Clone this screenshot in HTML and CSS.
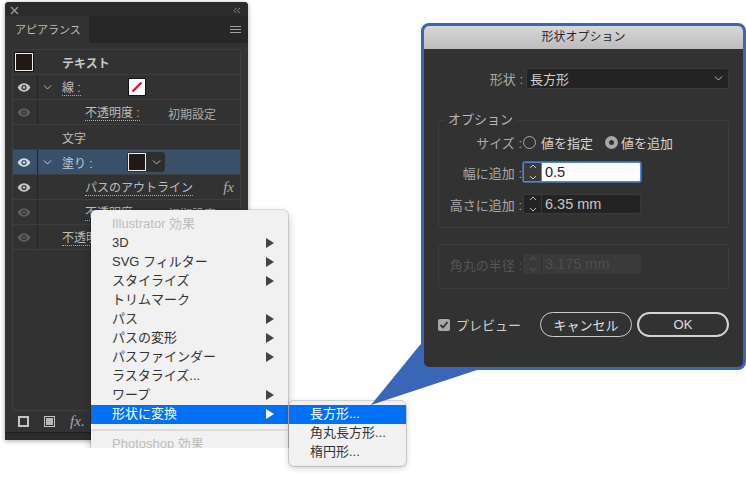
FILE: index.html
```html
<!DOCTYPE html>
<html lang="ja">
<head>
<meta charset="utf-8">
<title>形状オプション</title>
<link rel="stylesheet" href="styles.css">
</head>
<body>
<div class="canvas">
  <section class="panel">
    <div class="panel-top">
      <svg class="ico" width="9" height="9" viewBox="0 0 9 9"><path d="M1 1l7 7M8 1L1 8" stroke="#999" stroke-width="1.4"/></svg>
      <svg class="ico" width="8" height="7" viewBox="0 0 8 7"><path d="M3.5 1L1 3.5 3.5 6M7 1L4.500 3.500 7 6" stroke="#888" fill="none"/></svg>
    </div>
    <div class="tabs">
      <div class="tab">アピアランス</div>
      <svg class="burger" width="11" height="8" viewBox="0 0 11 8"><path d="M0 .5h11M0 3.500h11M0 6.500h11" stroke="#a0a0a0"/></svg>
    </div>
    <div class="list">
      <div class="row">
        <div class="eye"><span class="swatch big"></span></div>
        <div class="cell strong">テキスト</div>
      </div>
      <div class="row">
        <div class="eye"><svg class="eyei" width="14" height="9" viewBox="0 0 14 9"><path d="M.5 4.500C3 1 5 .3 7 .3s4 .7 6.500 4.200C11 8 9 8.700 7 8.700S3 8 .5 4.500z" fill="#c8c8c8"/><circle cx="7" cy="4.500" r="2.600" fill="#333"/><circle cx="7" cy="4.500" r="1.300" fill="#c8c8c8"/></svg></div>
        <div class="cell"><svg class="chev" width="9" height="5" viewBox="0 0 9 5"><path d="M1 .5l3.500 3.500L8 .5" stroke="#bbb" fill="none"/></svg><span class="lab link">線 :</span><span class="stroke-sw"><svg width="12" height="12" viewBox="0 0 12 12"><path d="M1.500 10.500l9-9" stroke="#e0103c" stroke-width="2.400"/></svg></span></div>
      </div>
      <div class="row">
        <div class="eye dim"><svg class="eyei" width="14" height="9" viewBox="0 0 14 9"><path d="M.5 4.500C3 1 5 .3 7 .3s4 .7 6.500 4.200C11 8 9 8.700 7 8.700S3 8 .5 4.500z" fill="#5e5e5e"/><circle cx="7" cy="4.500" r="2.600" fill="#333"/><circle cx="7" cy="4.500" r="1.300" fill="#5e5e5e"/></svg></div>
        <div class="cell indent"><span class="link">不透明度 :</span><span class="val">初期設定</span></div>
      </div>
      <div class="row">
        <div class="eye blank"></div>
        <div class="cell plain">文字</div>
      </div>
      <div class="row sel">
        <div class="eye"><svg class="eyei" width="14" height="9" viewBox="0 0 14 9"><path d="M.5 4.500C3 1 5 .3 7 .3s4 .7 6.500 4.200C11 8 9 8.700 7 8.700S3 8 .5 4.500z" fill="#d0d8e0"/><circle cx="7" cy="4.500" r="2.600" fill="#39506a"/><circle cx="7" cy="4.500" r="1.300" fill="#d0d8e0"/></svg></div>
        <div class="cell"><svg class="chev" width="9" height="5" viewBox="0 0 9 5"><path d="M1 .5l3.500 3.500L8 .5" stroke="#ccd" fill="none"/></svg><span class="lab fillname">塗り :</span><span class="fill-sw"><span class="swatch"></span><svg width="9" height="5" viewBox="0 0 9 5"><path d="M1 .5l3.500 3.500L8 .5" stroke="#bbb" fill="none"/></svg></span></div>
      </div>
      <div class="row">
        <div class="eye"><svg class="eyei" width="14" height="9" viewBox="0 0 14 9"><path d="M.5 4.500C3 1 5 .3 7 .3s4 .7 6.500 4.200C11 8 9 8.700 7 8.700S3 8 .5 4.500z" fill="#c8c8c8"/><circle cx="7" cy="4.500" r="2.600" fill="#333"/><circle cx="7" cy="4.500" r="1.300" fill="#c8c8c8"/></svg></div>
        <div class="cell indent"><span class="link">パスのアウトライン</span><i class="fx">fx</i></div>
      </div>
      <div class="row">
        <div class="eye dim"><svg class="eyei" width="14" height="9" viewBox="0 0 14 9"><path d="M.5 4.500C3 1 5 .3 7 .3s4 .7 6.500 4.200C11 8 9 8.700 7 8.700S3 8 .5 4.500z" fill="#5e5e5e"/><circle cx="7" cy="4.500" r="2.600" fill="#333"/><circle cx="7" cy="4.500" r="1.300" fill="#5e5e5e"/></svg></div>
        <div class="cell indent"><span class="link">不透明度 :</span><span class="val">初期設定</span></div>
      </div>
      <div class="row">
        <div class="eye dim"><svg class="eyei" width="14" height="9" viewBox="0 0 14 9"><path d="M.5 4.500C3 1 5 .3 7 .3s4 .7 6.500 4.200C11 8 9 8.700 7 8.700S3 8 .5 4.500z" fill="#5e5e5e"/><circle cx="7" cy="4.500" r="2.600" fill="#333"/><circle cx="7" cy="4.500" r="1.300" fill="#5e5e5e"/></svg></div>
        <div class="cell plain"><span class="link">不透明度</span></div>
      </div>
    </div>
    <div class="tools">
      <svg width="11" height="11" viewBox="0 0 11 11"><rect x="1" y="1" width="9" height="9" fill="none" stroke="#c4c4c4" stroke-width="2"/></svg>
      <svg width="11" height="11" viewBox="0 0 11 11"><rect x=".5" y=".5" width="10" height="10" fill="none" stroke="#c4c4c4"/><rect x="2" y="2" width="7" height="7" fill="#b8b8b8"/></svg>
      <span class="tool-fx"><i>fx</i>.</span>
    </div>
    <div class="panel-foot"></div>
  </section>

  <nav class="menu">
    <div class="mi dis">Illustrator 効果</div>
    <div class="mi arrow">3D</div>
    <div class="mi arrow">SVG フィルター</div>
    <div class="mi arrow">スタイライズ</div>
    <div class="mi">トリムマーク</div>
    <div class="mi arrow">パス</div>
    <div class="mi arrow">パスの変形</div>
    <div class="mi arrow">パスファインダー</div>
    <div class="mi">ラスタライズ...</div>
    <div class="mi arrow">ワープ</div>
    <div class="mi arrow on">形状に変換</div>
    <div class="sep"></div>
    <div class="mi dis">Photoshop 効果</div>
  </nav>

  <nav class="submenu">
    <div class="si on">長方形...</div>
    <div class="si">角丸長方形...</div>
    <div class="si">楕円形...</div>
  </nav>

  <svg class="callout" width="130" height="80" viewBox="0 0 130 80"><polygon points="2,69 55,4 111,33" fill="#3a66b8"/></svg>

  <section class="dialog">
    <header class="title">形状オプション</header>
    <div class="body">
      <div class="shape-row">
        <span class="flab">形状 :</span>
        <div class="select"><span>長方形</span><svg width="9" height="5" viewBox="0 0 9 5"><path d="M1 .5l3.500 3.500L8 .5" stroke="#bbb" fill="none"/></svg></div>
      </div>
      <fieldset class="group">
        <legend>オプション</legend>
        <div class="frow radios">
          <span class="l1">サイズ :</span>
          <span class="radio"></span><span class="rt">値を指定</span>
          <span class="radio chk"></span><span class="rt">値を追加</span>
        </div>
        <div class="frow">
          <span class="l1">幅に追加 :</span>
          <div class="spin focus"><span class="st"><svg width="8" height="18" viewBox="0 0 8 18"><path d="M1 5l3-3 3 3M1 13l3 3 3-3" stroke="#555" fill="none"/></svg></span><span class="sv">0.5</span></div>
        </div>
        <div class="frow">
          <span class="l1">高さに追加 :</span>
          <div class="spin"><span class="st"><svg width="8" height="18" viewBox="0 0 8 18"><path d="M1 5l3-3 3 3M1 13l3 3 3-3" stroke="#bbb" fill="none"/></svg></span><span class="sv">6.35 mm</span></div>
        </div>
      </fieldset>
      <div class="group off">
        <div class="frow">
          <span class="l1 offl">角丸の半径 :</span>
          <div class="spin dim"><span class="st"><svg width="8" height="18" viewBox="0 0 8 18"><path d="M1 5l3-3 3 3M1 13l3 3 3-3" stroke="#555" fill="none"/></svg></span><span class="sv">3.175 mm</span></div>
        </div>
      </div>
      <div class="actions">
        <span class="check"><svg width="10" height="10" viewBox="0 0 10 10"><path d="M1.500 5l2.500 2.500L8.500 2" stroke="#333" stroke-width="1.800" fill="none"/></svg></span>
        <span class="pv">プレビュー</span>
        <button class="btn cancel">キャンセル</button>
        <button class="btn ok">OK</button>
      </div>
    </div>
  </section>
</div>
</body>
</html>
```
FILE: styles.css
```css
* { box-sizing: border-box; }
html, body { margin: 0; padding: 0; background: #fff; }
body { font-family: "Liberation Sans", "Noto Sans CJK JP", sans-serif; font-size: 12px; }
.canvas { position: relative; width: 746px; height: 493px; overflow: hidden; }

/* Appearance panel */
.panel { position: absolute; left: 5px; top: 2px; width: 243px; height: 438px; background: #323232; border-radius: 4px 4px 0 0; display: flex; flex-direction: column; box-shadow: 0 1px 5px rgba(0,0,0,.35); color: #bdbdbd; }
.panel-top { height: 14px; background: #2b2b2b; display: flex; justify-content: space-between; align-items: center; padding: 2px 7px 0 5px; border-radius: 4px 4px 0 0; }
.tabs { height: 27px; background: #272727; display: flex; justify-content: space-between; align-items: center; padding-right: 7px; }
.tab { width: 84px; height: 27px; line-height: 28px; background: #323232; color: #bcbcbc; font-size: 11px; padding-left: 10px; }
.list { margin: 6px 7px 0; height: 362px; border: 1px solid #3e3e3e; border-radius: 2px; }
.row { height: 25px; display: flex; border-bottom: 1px solid #3e3e3e; }
.eye { width: 25px; display: flex; align-items: center; justify-content: center; padding-right: 3px; border-right: 1px solid #242424; }
.row:first-child .eye, .eye.blank { border-right: 0; }
.cell { flex: 1; display: flex; align-items: center; padding-left: 5px; position: relative; font-size: 12px; }
.cell.strong { font-weight: bold; color: #c8c8c8; padding-left: 24px; }
.cell.plain { padding-left: 24px; }
.cell.indent { padding-left: 47px; }
.chev { margin-right: 10px; }
.link { border-bottom: 1px dotted #aaa; line-height: 13px; margin-top: 3px; }
.val { position: absolute; left: 130px; top: 5px; color: #aaa; }
.fx { position: absolute; right: 6px; font-family: "Liberation Serif", serif; font-size: 15px; color: #aaa; }
.swatch { display: block; width: 18px; height: 18px; background: #231815; border: 1px solid #eee; flex: none; }
.swatch.big { outline: 1px solid #111; }
.stroke-sw { position: absolute; left: 91px; top: 4px; width: 16px; height: 16px; background: #fff; border: 2px solid #fff; outline: 1px solid #111; display: flex; align-items: center; justify-content: center; }
.sel { background: #3a5068; color: #c8d0d8; }
.sel .eye { background: #3a5068; }
.fillname { color: #c0cad4; }
.fill-sw { position: absolute; left: 89px; top: 2px; width: 38px; height: 20px; background: #2e2e2e; border-radius: 3px; display: flex; align-items: center; gap: 6px; padding-left: 1px; }
.tools { height: 21px; display: flex; align-items: center; gap: 15px; padding-left: 13px; }
.tool-fx { font-family: "Liberation Serif", serif; font-size: 15px; color: #aaa; }
.panel-foot { flex: 1; border-top: 1px solid #1e1e1e; background: #2b2b2b; }

/* callout */
.callout { position: absolute; left: 369px; top: 336px; }

/* Popup menus */
.menu { position: absolute; left: 91px; top: 210px; width: 197px; height: 238px; background: #f1f1f1; border-radius: 5px 5px 0 0; padding-top: 5px; box-shadow: 0 0 0 1px rgba(0,0,0,.12), 0 4px 10px rgba(0,0,0,.25); clip-path: inset(-12px -12px 0 -12px); color: #333; font-size: 13px; }
.mi { height: 19px; line-height: 18px; padding-left: 21px; position: relative; }
.mi.dis { color: #bdbdbd; }
.mi.on, .si.on { background: #0071f5; color: #fff; }
.arrow::after { content: ""; position: absolute; right: 14px; top: 4px; border-left: 8px solid #444; border-top: 5px solid transparent; border-bottom: 5px solid transparent; }
.on.arrow::after { border-left-color: #fff; }
.sep { height: 2px; background: #dcdcdc; margin: 5px 0 4px; }
.submenu { position: absolute; left: 289px; top: 401px; width: 117px; height: 65px; background: #f1f1f1; border-radius: 5px; padding-top: 4px; box-shadow: 0 0 0 1px rgba(0,0,0,.15), 0 2px 6px rgba(0,0,0,.2); color: #333; font-size: 13px; }
.si { height: 19px; line-height: 18px; padding-left: 21px; }

/* Dialog */
.dialog { position: absolute; left: 421px; top: 23px; width: 325px; height: 347px; border: 3px solid #3a66b8; border-radius: 8px; background: #323232; color: #c8c8c8; overflow: hidden; font-size: 13px; }
.title { height: 23px; line-height: 22px; text-align: center; background: linear-gradient(#d8d8d8, #bcbcbc); color: #2a2a2a; font-size: 12px; }
.body { padding: 19px 14px 0 14px; }
.shape-row { display: flex; align-items: center; justify-content: flex-end; height: 21px; }
.flab { color: #aaa; margin-right: 3px; }
.select { width: 203px; height: 21px; background: #232323; border: 1px solid #3a3a3a; border-radius: 2px; display: flex; justify-content: space-between; align-items: center; padding: 0 5px 0 3px; color: #d0d0d0; }
.group { margin: 24px 0 0; padding: 7px 0 0; border: 1px solid #3c3c3c; border-radius: 3px; height: 115px; min-width: 0; }
legend { padding: 0 4px; margin-left: 5px; color: #b8b8b8; line-height: 14px; }
.frow { display: flex; align-items: center; height: 20px; margin-bottom: 12px; padding-left: 84px; position: relative; }
.radios { height: 16px; margin-bottom: 12px; }
.l1 { position: absolute; right: calc(100% - 83px); color: #aaa; white-space: nowrap; }
.radio { width: 13px; height: 13px; border: 1px solid #aaa; border-radius: 50%; margin-right: 5px; flex: none; }
.radio.chk { border: 4px solid #a8a8a8; background: #333; margin-left: 12px; margin-right: 3px; }
.rt { color: #d4d4d4; }
.spin { width: 118px; height: 20px; display: flex; background: #232323; border: 1px solid #3a3a3a; border-radius: 2px; }
.st { width: 18px; display: flex; align-items: center; justify-content: center; border-right: 1px solid #3a3a3a; flex: none; }
.sv { padding-left: 3px; line-height: 18px; font-size: 14.500px; color: #c8c8c8; }
.focus { background: #fff; border-color: #4a8ad8; box-shadow: 0 0 0 1px rgba(74,138,216,.6); }
.focus .st { background: #3a3a3a; border-right-color: #4a8ad8; }
.focus .st path { stroke: #ccc; }
.focus .sv { color: #222; }
.off { margin-top: 16px; height: 45px; padding: 9px 0 0; }
.off .frow { margin-bottom: 0; }
.offl { color: #555; }
.spin.dim { background: #3a3a3a; border-color: #3a3a3a; }
.spin.dim .sv { color: #4e4e4e; }
.spin.dim .st { border-right-color: #2e2e2e; }
.actions { display: flex; align-items: center; margin-top: 23px; height: 25px; }
.check { width: 12px; height: 12px; background: #a8a8a8; border-radius: 2px; display: flex; align-items: center; justify-content: center; flex: none; }
.pv { margin-left: 6px; width: 84px; color: #cfcfcf; }
.btn { background: transparent; color: #e0e0e0; border-radius: 13px; height: 25px; font: inherit; padding: 0; }
.cancel { width: 92px; border: 1px solid #ccc; }
.ok { width: 92px; margin-left: 5px; border: 2px solid #d4d4d4; }
```
